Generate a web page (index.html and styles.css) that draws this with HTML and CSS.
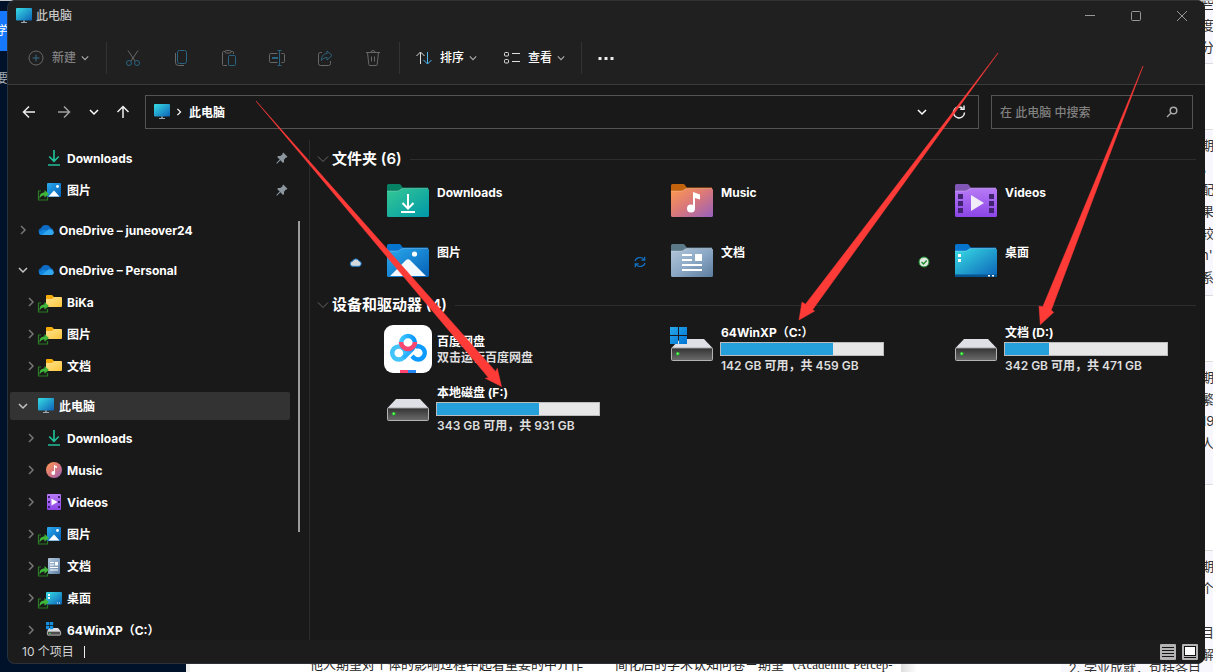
FILE: index.html
```
<!DOCTYPE html>
<html lang="zh-CN">
<head>
<meta charset="utf-8">
<title>此电脑</title>
<link rel="stylesheet" href="styles.css">
</head>
<body>
<svg class="defs" width="0" height="0" aria-hidden="true">
  <defs>
    <linearGradient id="g-screen" x1="0" y1="0" x2="1" y2="1"><stop offset="0" stop-color="#38dde4"/><stop offset="1" stop-color="#0c62b8"/></linearGradient>
    <linearGradient id="g-down" x1="0" y1="0" x2="1" y2="1"><stop offset="0" stop-color="#35c994"/><stop offset="1" stop-color="#0097a8"/></linearGradient>
    <linearGradient id="g-music" x1="0" y1="0" x2="1" y2="1"><stop offset="0" stop-color="#ff9a4e"/><stop offset=".5" stop-color="#d8777c"/><stop offset="1" stop-color="#9660bd"/></linearGradient>
    <linearGradient id="g-video" x1="0" y1="0" x2="0" y2="1"><stop offset="0" stop-color="#b77af5"/><stop offset="1" stop-color="#8b45e6"/></linearGradient>
    <linearGradient id="g-pic" x1="0" y1="0" x2="1" y2="1"><stop offset="0" stop-color="#2ba9ee"/><stop offset="1" stop-color="#0560b5"/></linearGradient>
    <linearGradient id="g-doc" x1="0" y1="0" x2="1" y2="1"><stop offset="0" stop-color="#b3c6d8"/><stop offset=".5" stop-color="#8ba8c6"/><stop offset="1" stop-color="#5d7d9f"/></linearGradient>
    <linearGradient id="g-yellow" x1="0" y1="0" x2="1" y2="1"><stop offset="0" stop-color="#ffe390"/><stop offset="1" stop-color="#fdc73c"/></linearGradient>
    <linearGradient id="g-drive" x1="0" y1="0" x2="0" y2="1"><stop offset="0" stop-color="#333"/><stop offset="1" stop-color="#6b6b6b"/></linearGradient>
    <linearGradient id="g-win" x1="0" y1="0" x2="1" y2="1"><stop offset="0" stop-color="#28a8ea"/><stop offset="1" stop-color="#0074d4"/></linearGradient>
    <linearGradient id="g-pan" x1="0" y1="0" x2="1" y2="0"><stop offset="0" stop-color="#3fc8ff"/><stop offset="1" stop-color="#0a96ff"/></linearGradient>
  </defs>
  <symbol id="i-right" viewBox="0 0 10 10"><path d="M3 1l4 4-4 4" fill="none" stroke="currentColor" stroke-width="1.5"/></symbol>
  <symbol id="i-chev" viewBox="0 0 10 10"><path d="M1 3l4 4 4-4" fill="none" stroke="currentColor" stroke-width="1.5"/></symbol>
  <symbol id="i-thin" viewBox="0 0 12 12"><path d="M1 3.500l5 5 5-5" fill="none" stroke="currentColor"/></symbol>
  <symbol id="i-pc" viewBox="0 0 16 16"><rect width="16" height="12.5" rx="1" fill="url(#g-screen)"/><path d="M7.2 12.5h1.6V14H11v1H5v-1h2.2z" fill="#9aa8b4"/></symbol>
  <symbol id="i-dl" viewBox="0 0 16 16"><path d="M8 0v11M3.2 6.5L8 11.3l4.800-4.800M2 15h12" fill="none" stroke="#20bc97" stroke-width="1.7"/></symbol>
  <symbol id="i-cloud" viewBox="0 0 16 16"><path d="M3.500 13A3.500 3.500 0 0 1 3 6.200 5.300 5.300 0 0 1 12.700 6a3.600 3.600 0 0 1 0 7z" fill="#0f6cc4"/><path d="M1 11.500C3 7.500 7 6.500 9 9l-1 4H3.500A3.500 3.500 0 0 1 1 11.500z" fill="#1289e0"/><path d="M4 13l5-4.500a4 4 0 0 1 6.800 1.800A2.700 2.700 0 0 1 13 13z" fill="#31a8f0"/></symbol>
  <symbol id="i-link" viewBox="0 0 12 12"><path d="M4 2H1.500v9h9V8" fill="none" stroke="#2a7b25" stroke-width="1.200"/><path d="M2.500 9.500C2.500 5.500 4 3.500 7.500 3.500V1L12 5 7.500 8.700V6.500C5 6.300 4 7.500 2.500 9.500z" fill="#3fb53a"/></symbol>
  <symbol id="i-picture" viewBox="0 0 16 16"><rect x="1" y="1" width="14" height="14" rx="1" fill="url(#g-pic)"/><path d="M2.500 14.500L8 8.500l5.500 6z" fill="#fff"/><circle cx="11.500" cy="4.500" r="1.400" fill="#fff"/></symbol>
  <symbol id="i-yellow" viewBox="0 0 16 16"><path d="M0 2a1 1 0 0 1 1-1h5l2 2h7v4H0z" fill="#f5ab0a"/><path d="M0 5h6l2-2h7a1 1 0 0 1 1 1v8a1 1 0 0 1-1 1H1a1 1 0 0 1-1-1z" fill="url(#g-yellow)"/></symbol>
  <symbol id="i-music" viewBox="0 0 16 16"><circle cx="8" cy="8" r="8" fill="url(#g-music)"/><path d="M8 3l3 1.500v1.600L9 5.500V11" fill="#fff"/><circle cx="7.300" cy="11" r="1.900" fill="#fff"/><path d="M8 3h1v8H8z" fill="#fff"/></symbol>
  <symbol id="i-video" viewBox="0 0 16 16"><rect x="1" width="14" height="16" rx="1" fill="url(#g-video)"/><path d="M2 2h2v2H2zM2 7h2v2H2zM2 12h2v2H2zM12 2h2v2h-2zM12 7h2v2h-2zM12 12h2v2h-2z" fill="#3c1f70"/><path d="M5.500 4.500v7l6-3.500z" fill="#fff"/></symbol>
  <symbol id="i-doc" viewBox="0 0 16 16"><rect x="2" width="12" height="16" rx="1" fill="url(#g-doc)"/><path d="M4 4h4v1H4zM4 6.500h4v1H4zM9 4h3v3.500H9zM4 9h8v1H4zM4 11.500h8v1H4z" fill="#fff"/></symbol>
  <symbol id="i-desk" viewBox="0 0 16 16"><rect y="2" width="16" height="12.500" rx="1" fill="url(#g-screen)"/><path d="M2 4h2v2H2zM2 7h2v2H2zM11 12.500h1v1h-1zM13 12.500h1v1h-1z" fill="#fff"/></symbol>
  <symbol id="i-disk" viewBox="0 0 16 16"><path d="M3 6h9l3 3.500H1z" fill="#dedfe4"/><rect x="1.400" y="9.400" width="13.200" height="3.700" rx=".6" fill="#4c4c4c" stroke="#b5b5b5"/><path d="M3 11h1.500v1H3z" fill="#36e036"/><path d="M0 0h3.300v3.300H0zM3.900 0h3.300v3.300H3.900zM0 3.900h3.300v3.300H0zM3.900 3.900h3.300v3.300H3.900z" fill="#148fe0"/></symbol>
  <symbol id="i-pin" viewBox="0 0 12 12"><path d="M7.200.5l4.300 4.300-.8.800-1 .2-1.700 2 0 2.200-1 .9-2.600-2.600L1.200 11.500.5 11.500.5 10.800 3.700 7.600 1.200 5.100l.9-1 2.200 0 2-1.700.2-1z" fill="#8c979f"/></symbol>
  <symbol id="f-base" viewBox="0 0 48 48"><path d="M3 6.500A1.500 1.500 0 0 1 4.500 5h10.700c1.500 0 2.300 2 3.500 3.500H44V15H3z" fill="currentColor"/><path d="M3 12h10c3 0 3.500-2.500 6-2.500h24.500A1.500 1.500 0 0 1 45 11v25.500a1.500 1.500 0 0 1-1.500 1.500h-39A1.500 1.500 0 0 1 3 36.500z"/><path d="M3 12h10c3 0 3.500-2.500 6-2.500h25" fill="none" stroke="#fff" stroke-opacity=".3" stroke-width=".8"/></symbol>
  <symbol id="d-base" viewBox="0 0 48 48"><path d="M12 14h24l8.500 9h-41z" fill="#dfe0e5"/><rect x="3.500" y="22.900" width="41" height="12.600" rx="1" fill="url(#g-drive)" stroke="#b3b3b3"/><circle cx="9.800" cy="28.800" r="1.800" fill="#20d02a"/><circle cx="9.600" cy="28.600" r=".8" fill="#9dfc8f"/></symbol>
</svg>

<div class="backdrop" aria-hidden="true">
  <div class="back-nav">
    <span class="back-tab">学</span>
    <span class="back-item">要</span>
  </div>
  <div class="back-page">
    <p>他人期望对个体的影响过程中起着重要的中介作</p>
    <p>简化后的学术认知问卷－期望（Academic Percep-</p>
  </div>
  <div class="back-notes"><p>2. 学业成就，包括各目</p></div>
  <div class="back-edge">
    <div class="edge-panel edge-first"><p>些</p><p>度</p><p>分</p></div>
    <div class="edge-panel edge-second"><p>期</p><p>，</p><p>配</p><p>果</p><p>较</p><p>n's</p><p>系</p></div>
    <div class="edge-panel edge-third"><p>期</p><p>繁</p><p>19,</p><p>人</p></div>
    <div class="edge-panel edge-last"><p>期</p><p>个</p><p></p><p>目</p><p>解</p></div>
  </div>
</div>

<main class="window">
  <header class="titlebar">
    <svg class="i16"><use href="#i-pc"/></svg>
    <h1>此电脑</h1>
    <div class="caption">
      <button type="button" aria-label="最小化"><svg viewBox="0 0 12 12"><path d="M1 5.500h10"/></svg></button>
      <button type="button" aria-label="最大化"><svg viewBox="0 0 12 12"><rect x="1.500" y="1.500" width="9" height="9" rx="1"/></svg></button>
      <button type="button" aria-label="关闭"><svg viewBox="0 0 12 12"><path d="M1 1l10 10M11 1L1 11"/></svg></button>
    </div>
  </header>

  <div class="toolbar" role="toolbar" aria-label="命令栏">
    <button type="button" class="cmd cmd-new" disabled><svg class="i16" viewBox="0 0 16 16"><circle cx="8" cy="8" r="7" stroke="#686868"/><path d="M8 4.500v7M4.500 8h7" stroke="#376a86"/></svg><span>新建</span><svg class="i10"><use href="#i-chev"/></svg></button>
    <span class="sep"></span>
    <button type="button" class="tool" aria-label="剪切" disabled><svg class="i18" viewBox="0 0 18 18"><path d="M4 1.500l7 10.500M14 1.500L7 12" stroke="#686868"/><circle cx="5" cy="14" r="2.500" stroke="#2b6482"/><circle cx="13" cy="14" r="2.500" stroke="#2b6482"/></svg></button>
    <button type="button" class="tool" aria-label="复制" disabled><svg class="i18" viewBox="0 0 18 18"><path d="M3.500 4v9.500a3 3 0 0 0 3 3H12" stroke="#686868"/><rect x="5.500" y="1.500" width="9" height="13" rx="2" stroke="#2b6482"/></svg></button>
    <button type="button" class="tool" aria-label="粘贴" disabled><svg class="i18" viewBox="0 0 18 18"><path d="M5 2.500H3.500a1 1 0 0 0-1 1v12a1 1 0 0 0 1 1H7M11 2.500h1.500a1 1 0 0 1 1 1V5" stroke="#686868"/><rect x="5" y="1.500" width="6" height="2.500" rx="1.200" stroke="#686868"/><rect x="8.500" y="6.500" width="7" height="10" rx="1" stroke="#2b6482"/></svg></button>
    <button type="button" class="tool" aria-label="重命名" disabled><svg class="i18" viewBox="0 0 18 18"><path d="M9.500 4.500h-7a1 1 0 0 0-1 1v7a1 1 0 0 0 1 1h7M13.500 4.500h2a1 1 0 0 1 1 1v7a1 1 0 0 1-1 1h-2" stroke="#686868"/><path d="M9.500 1.500h4M9.500 16.500h4M11.500 1.500v15" stroke="#2b6482"/><path d="M4 9h6" stroke="#2b6482" stroke-width="2"/></svg></button>
    <button type="button" class="tool" aria-label="共享" disabled><svg class="i18" viewBox="0 0 18 18"><path d="M6 3.500H4.500a2 2 0 0 0-2 2v9a2 2 0 0 0 2 2h8a2 2 0 0 0 2-2V12" stroke="#686868"/><path d="M11 2l5 4.500-5 4.500V8.500c-2.500 0-4 1-5.500 3 0-4 1.500-6.500 5.500-7z" stroke="#2b6482"/></svg></button>
    <button type="button" class="tool" aria-label="删除" disabled><svg class="i18" viewBox="0 0 18 18"><path d="M2 3.500h14M7 3.500a2 2 0 0 1 4 0M3.500 3.500l1.300 12a1 1 0 0 0 1 1h6.400a1 1 0 0 0 1-1l1.300-12M7.500 7.500v5M10.500 7.500v5" stroke="#686868"/></svg></button>
    <span class="sep"></span>
    <button type="button" class="cmd cmd-sort"><svg class="i16" viewBox="0 0 16 16"><path d="M4.500 14V2.500M.5 6l4-4 4 4" stroke="#ddd"/><path d="M11.500 2v11.500M7.500 10l4 4 4-4" stroke="#4cb4f0"/></svg><span>排序</span><svg class="i10"><use href="#i-chev"/></svg></button>
    <button type="button" class="cmd cmd-view"><svg class="i16" viewBox="0 0 16 16"><rect x=".5" y="2.500" width="4" height="3.500" rx="1" stroke="#ddd"/><rect x=".5" y="9.500" width="4" height="3.500" rx="1" stroke="#ddd"/><path d="M8 3.500h8M8 11.500h8" stroke="#ddd"/></svg><span>查看</span><svg class="i10"><use href="#i-chev"/></svg></button>
    <span class="sep"></span>
    <button type="button" class="tool" aria-label="更多"><svg class="i18" viewBox="0 0 18 18"><path d="M1.500 8h3v3h-3zM7.500 8h3v3h-3zM13.500 8h3v3h-3z" fill="#eee"/></svg></button>
  </div>

  <div class="addressbar">
    <button type="button" class="nav-back" aria-label="后退"><svg class="i14" viewBox="0 0 14 14"><path d="M13 7H1.500M7 1.500L1.500 7 7 12.500"/></svg></button>
    <button type="button" class="nav-forward" aria-label="前进"><svg class="i14" viewBox="0 0 14 14"><path d="M1 7h11.500M7 1.500L12.500 7 7 12.500"/></svg></button>
    <button type="button" class="nav-recent" aria-label="最近位置"><svg class="i10"><use href="#i-chev"/></svg></button>
    <button type="button" class="nav-up" aria-label="向上"><svg class="i14" viewBox="0 0 14 14"><path d="M7 13V1.500M1.500 7L7 1.500 12.500 7"/></svg></button>
    <div class="address">
      <svg class="i16"><use href="#i-pc"/></svg>
      <svg class="crumb"><use href="#i-right"/></svg>
      <a href="#">此电脑</a>
      <button type="button" class="address-list" aria-label="历史记录"><svg class="i10"><use href="#i-chev"/></svg></button>
      <button type="button" aria-label="刷新"><svg class="i14" viewBox="0 0 14 14"><path d="M12.500 7.500A5.500 5.500 0 1 1 10.500 3.200M12 .5v3.800H8.200"/></svg></button>
    </div>
    <label class="search">
      <input type="search" aria-label="搜索" placeholder="在 此电脑 中搜索">
      <svg class="i14" viewBox="0 0 14 14"><circle cx="8.500" cy="5.500" r="3.300"/><path d="M6 8L2 12"/></svg>
    </label>
  </div>

  <div class="panes">
    <nav class="sidebar" aria-label="导航窗格">
      <ul>
        <li class="child"><svg class="i10 hid"><use href="#i-right"/></svg><svg class="i16"><use href="#i-dl"/></svg><a href="#">Downloads</a><svg class="i12 pin"><use href="#i-pin"/></svg></li>
        <li class="child"><svg class="i10 hid"><use href="#i-right"/></svg><span class="linked"><svg class="i16"><use href="#i-picture"/></svg><svg class="badge"><use href="#i-link"/></svg></span><a href="#">图片</a><svg class="i12 pin"><use href="#i-pin"/></svg></li>
      </ul>
      <ul>
        <li><svg class="i10"><use href="#i-right"/></svg><svg class="i16"><use href="#i-cloud"/></svg><a href="#">OneDrive – juneover24</a></li>
      </ul>
      <ul>
        <li><svg class="i10 open"><use href="#i-chev"/></svg><svg class="i16"><use href="#i-cloud"/></svg><a href="#">OneDrive – Personal</a></li>
        <li class="child"><svg class="i10"><use href="#i-right"/></svg><span class="linked"><svg class="i16"><use href="#i-yellow"/></svg><svg class="badge"><use href="#i-link"/></svg></span><a href="#">BiKa</a></li>
        <li class="child"><svg class="i10"><use href="#i-right"/></svg><span class="linked"><svg class="i16"><use href="#i-yellow"/></svg><svg class="badge"><use href="#i-link"/></svg></span><a href="#">图片</a></li>
        <li class="child"><svg class="i10"><use href="#i-right"/></svg><span class="linked"><svg class="i16"><use href="#i-yellow"/></svg><svg class="badge"><use href="#i-link"/></svg></span><a href="#">文档</a></li>
      </ul>
      <ul>
        <li class="selected"><svg class="i10 open"><use href="#i-chev"/></svg><svg class="i16"><use href="#i-pc"/></svg><a href="#">此电脑</a></li>
        <li class="child"><svg class="i10"><use href="#i-right"/></svg><svg class="i16"><use href="#i-dl"/></svg><a href="#">Downloads</a></li>
        <li class="child"><svg class="i10"><use href="#i-right"/></svg><svg class="i16"><use href="#i-music"/></svg><a href="#">Music</a></li>
        <li class="child"><svg class="i10"><use href="#i-right"/></svg><svg class="i16"><use href="#i-video"/></svg><a href="#">Videos</a></li>
        <li class="child"><svg class="i10"><use href="#i-right"/></svg><span class="linked"><svg class="i16"><use href="#i-picture"/></svg><svg class="badge"><use href="#i-link"/></svg></span><a href="#">图片</a></li>
        <li class="child"><svg class="i10"><use href="#i-right"/></svg><span class="linked"><svg class="i16"><use href="#i-doc"/></svg><svg class="badge"><use href="#i-link"/></svg></span><a href="#">文档</a></li>
        <li class="child"><svg class="i10"><use href="#i-right"/></svg><span class="linked"><svg class="i16"><use href="#i-desk"/></svg><svg class="badge"><use href="#i-link"/></svg></span><a href="#">桌面</a></li>
        <li class="child"><svg class="i10"><use href="#i-right"/></svg><svg class="i16"><use href="#i-disk"/></svg><a href="#">64WinXP（C:）</a></li>
      </ul>
      <span class="scroll-thumb"></span>
    </nav>

    <section class="content">
      <h2><svg class="i12"><use href="#i-thin"/></svg>文件夹 (6)</h2>
      <div class="tiles">
        <article class="tile folder"><span class="state"></span>
          <svg class="icon" viewBox="0 0 48 48"><use href="#f-base" color="#078163" fill="url(#g-down)"/><path d="M24 15v14M18.500 24l5.500 5.500 5.500-5.500M17 33h14" fill="none" stroke="#fff" stroke-width="2"/></svg>
          <h3>Downloads</h3></article>
        <article class="tile folder"><span class="state"></span>
          <svg class="icon" viewBox="0 0 48 48"><use href="#f-base" color="#c4630e" fill="url(#g-music)"/><path d="M25 13l7 2.500v5l-5-1.500v11h-2z" fill="#fff"/><circle cx="23" cy="29.500" r="4" fill="#fff"/></svg>
          <h3>Music</h3></article>
        <article class="tile folder"><span class="state"></span>
          <svg class="icon" viewBox="0 0 48 48"><use href="#f-base" color="#8157b5" fill="url(#g-video)"/><path d="M6 15h5v5H6zM6 22h5v5H6zM6 29h5v5H6zM37 15h5v5h-5zM37 22h5v5h-5zM37 29h5v5h-5z" fill="#42236f"/><path d="M19 16v16l13-8z" fill="#f1edf8"/></svg>
          <h3>Videos</h3></article>
        <article class="tile folder"><span class="state"><svg class="i12" viewBox="0 0 12 12"><path d="M3 10.300A2.500 2.500 0 0 1 2.500 5.300 3.500 3.500 0 0 1 9 5a2.700 2.700 0 0 1 0 5.300z" fill="#d5d8db" stroke="#1d7fd1"/></svg></span>
          <svg class="icon" viewBox="0 0 48 48"><use href="#f-base" color="#0574cf" fill="url(#g-pic)"/><path d="M6 37l15.500-15.500a3.500 3.500 0 0 1 5 0L42 37z" fill="#f3f8fe"/><circle cx="30.500" cy="15" r="2.600" fill="#fff"/></svg>
          <h3>图片</h3></article>
        <article class="tile folder"><span class="state"><svg class="i12" viewBox="0 0 12 12"><path d="M1 5a5 4.500 0 0 1 9-1.500M10.700.8v3.400H7.300M11 7a5 4.500 0 0 1-9 1.500M1.300 11.200V7.800h3.400" fill="none" stroke="#1273c8" stroke-width="1.200"/></svg></span>
          <svg class="icon" viewBox="0 0 48 48"><use href="#f-base" color="#5b7988" fill="url(#g-doc)"/><path d="M14 15h10v2H14zM14 20h10v2H14zM27 15h7v7h-7zM14 25h20v2H14zM14 30h20v2H14z" fill="#fff"/></svg>
          <h3>文档</h3></article>
        <article class="tile folder"><span class="state"><svg class="i12" viewBox="0 0 12 12"><circle cx="6" cy="6" r="5" fill="#dfe8df" stroke="#188a2c"/><path d="M3.500 6l2 2 3.200-3.500" fill="none" stroke="#188a2c" stroke-width="1.300"/></svg></span>
          <svg class="icon" viewBox="0 0 48 48"><use href="#f-base" color="#0574cf" fill="url(#g-screen)"/><path d="M3 35.500h42v1.500a1 1 0 0 1-1 1H4a1 1 0 0 1-1-1z" fill="#07538f"/><path d="M6 15h3v3H6zM6 20h3v3H6zM36 36h2v1.500h-2zM40 36h2v1.500h-2z" fill="#fff"/></svg>
          <h3>桌面</h3></article>
      </div>

      <h2><svg class="i12"><use href="#i-thin"/></svg>设备和驱动器 (4)</h2>
      <div class="tiles">
        <article class="tile app"><span class="state"></span>
          <svg class="icon" viewBox="0 0 48 48"><rect width="48" height="48" rx="9" fill="#fff"/><path d="M16 45h8v3h-8z" fill="#ff4470"/><path d="M24 45h8v3h-8z" fill="#2488f6"/><g fill="none" stroke-width="4.500"><path d="M28 31l2 2a6.600 6.600 0 1 0 1.500-11.200" stroke="#0d9bff"/><circle cx="14.800" cy="28" r="6.600" stroke="#42c4fb"/><path d="M19.500 33l9.500-9.500" stroke="#2bb2ff"/><circle cx="24" cy="18" r="7" stroke="url(#g-pan)"/><path d="M17 17a7 7 0 1 0 14 0" stroke="#f84770"/></g></svg>
          <div class="detail"><h3>百度网盘</h3><p>双击运行百度网盘</p></div></article>
        <article class="tile drive"><span class="state"></span>
          <svg class="icon" viewBox="0 0 48 48"><use href="#d-base"/><path d="M2 2h8v8H2zM11 2h8v8h-8zM2 11h8v8H2zM11 11h8v8h-8z" fill="url(#g-win)"/></svg>
          <div class="detail"><h3>64WinXP（C:）</h3><div class="meter"><span style="width:69%"></span></div><p>142 GB 可用，共 459 GB</p></div></article>
        <article class="tile drive"><span class="state"></span>
          <svg class="icon" viewBox="0 0 48 48"><use href="#d-base"/></svg>
          <div class="detail"><h3>文档 (D:)</h3><div class="meter"><span style="width:27.400%"></span></div><p>342 GB 可用，共 471 GB</p></div></article>
        <article class="tile drive"><span class="state"></span>
          <svg class="icon" viewBox="0 0 48 48"><use href="#d-base"/></svg>
          <div class="detail"><h3>本地磁盘 (F:)</h3><div class="meter"><span style="width:63.200%"></span></div><p>343 GB 可用，共 931 GB</p></div></article>
      </div>
    </section>
  </div>

  <footer class="statusbar">
    <span class="count">10 个项目</span>
    <button type="button" class="first" aria-label="详细信息"><svg class="i16" viewBox="0 0 16 16"><rect width="16" height="16" rx="1" fill="#b4b4b4"/><path d="M2 3.500h12M2 6.500h12M2 9.500h12M2 12.500h12" stroke="#161616"/></svg></button>
    <button type="button" aria-label="大图标"><svg class="i16" viewBox="0 0 16 16"><rect width="16" height="16" rx="1" fill="#b4b4b4"/><rect x="2.500" y="2.500" width="11" height="9" fill="#fff" stroke="#111"/><path d="M2 13.500h12" stroke="#111"/></svg></button>
  </footer>
</main>

<svg class="marks" width="1213" height="672" viewBox="0 0 1213 672" aria-hidden="true">
  <g fill="#ff3b38" stroke="#ff3b38" stroke-width=".5">
    <path d="M256 101L495.600 371.400 497.300 368.300 501.500 386.500 485.300 378.300 488.400 377.600z"/>
    <path d="M998 53L812.600 309.700 814.700 311 799 320 802 302 805.400 304.300z"/>
    <path d="M1143 66L1051.200 310.200 1053.700 312.300 1040.300 324.700 1039 306.300 1042.800 306.800z"/>
  </g>
</svg>
</body>
</html>
```

FILE: styles.css
```
* { box-sizing: border-box; }

body {
  margin: 0;
  height: 100vh;
  overflow: hidden;
  background: #fff;
  color: #fff;
  font: 12px/16px Inter, "Noto Sans CJK SC", sans-serif;
}

h1, h2, h3, p, ul { margin: 0; padding: 0; font-size: inherit; font-weight: inherit; }
ul { list-style: none; }
a { color: inherit; text-decoration: none; }
svg { display: block; flex: none; }
button { display: flex; align-items: center; justify-content: center; margin: 0; padding: 0; border: 0; background: none; color: inherit; font: inherit; }

.defs { position: absolute; }
.i10 { width: 10px; height: 10px; }
.i12 { width: 12px; height: 12px; }
.i14 { width: 14px; height: 14px; }
.i16 { width: 16px; height: 16px; }
.i18 { width: 18px; height: 18px; }

/* Windows behind the explorer */
.backdrop {
  position: absolute;
  inset: 0;
  display: flex;
  overflow: hidden;
  border-top: 1px solid #c6c9ca;
  color: #333;
}
.back-nav { width: 186px; padding-top: 10px; background: #001229; color: #fff; }
.back-tab { display: block; width: 40px; height: 40px; margin-left: -4px; background: #1677ff; line-height: 40px; }
.back-item { display: block; margin: 20px 0 0 -4px; color: #a6adb4; }
.back-page {
  display: flex;
  align-items: flex-end;
  gap: 32px;
  width: 715px;
  padding-left: 120px;
  border-left: 4px solid #eee;
  background: #fff;
  color: #222;
  font: 13px/14px "Liberation Serif", "Noto Sans CJK SC", serif;
  white-space: nowrap;
}
.back-notes { display: flex; flex: 1; align-items: flex-end; justify-content: flex-end; background: linear-gradient(90deg, #ddd, #fff 16px, #fff 160px, #f8f7fd 160px); font-size: 13px; white-space: nowrap; }
.back-notes p { margin-bottom: -4px; }
.back-edge { width: 12px; overflow: hidden; background: #fff; }
.edge-panel { overflow: hidden; border-bottom: 1px solid #ddd; background: #f8f7fd; font-size: 13px; line-height: 22px; white-space: nowrap; }
.edge-panel p { min-height: 22px; }
.edge-first { height: 63px; }
.edge-first p:first-child { margin-top: -9px; }
.edge-second, .edge-third, .edge-last { margin-top: 65px; padding-top: 4px; border-top: 1px solid #ddd; }
.edge-second { height: 167px; }
.edge-third { height: 124px; }
.edge-last { height: 130px; }

/* Explorer window */
.window {
  position: relative;
  display: flex;
  flex-direction: column;
  height: calc(100vh - 8px);
  margin: 0 8px;
  overflow: hidden;
  border-top: 1px solid #303234;
  border-bottom: 1px solid #2c2f33;
  border-radius: 8px;
  box-shadow: -1px 0 0 #2a3440;
  background: #191919;
}

.titlebar { display: flex; align-items: center; gap: 4px; height: 29px; padding-left: 8px; background: #202020; color: #c4c4c4; }
.titlebar h1 { padding-top: 1px; font-weight: 500; }
.caption { display: flex; align-self: stretch; margin-left: auto; }
.caption button { width: 46px; }
.caption svg { width: 12px; height: 12px; fill: none; stroke: #989898; }

.toolbar { display: flex; align-items: center; height: 55px; padding-top: 1px; border-bottom: 1px solid #3a3a3a; background: #202020; }
.toolbar svg { fill: none; }
.sep { width: 1px; height: 32px; margin: 0 2px; background: #333; }
.tool { width: 48px; height: 36px; }
.sep + .tool:last-child { width: 44px; }
.cmd { height: 36px; font-weight: 500; }
.cmd .i10 { width: 8px; height: 8px; margin-left: 5px; color: #aaa; }
.cmd span { margin-left: 8px; padding-top: 1px; }
.cmd-new { padding: 0 15px 0 20px; color: #808080; }
.cmd-sort { padding: 0 13px 0 14px; }
.cmd-view { padding: 0 14px; }

.addressbar { display: flex; align-items: center; padding: 10px 12px 11px 3px; }
.addressbar svg { fill: none; stroke-width: 1.5; }
.addressbar > button, .address button { height: 32px; stroke: #eee; }
.nav-back { width: 36px; }
.addressbar > .nav-forward { width: 34px; stroke: #a0a0a0; }
.nav-recent { width: 26px; }
.nav-up { width: 32px; }
.nav-recent svg use, .address-list svg use { stroke: none; }
.address { display: flex; flex: 1; align-items: center; height: 34px; margin: 0 12px 0 6px; padding: 0 1px 0 8px; border: 1px solid #545454; font-weight: 700; }
.address .crumb { width: 8px; height: 8px; margin: 0 6px 0 5px; }
.address a { padding-top: 1px; }
.address button { width: 37px; }
.address .address-list { margin-left: auto; }
.search { display: flex; align-items: center; width: 202px; height: 34px; padding: 0 13px 0 8px; border: 1px solid #545454; }
.search input { flex: 1; min-width: 0; padding: 2px 0 0; border: 0; outline: 0; background: none; color: #fff; font: inherit; font-weight: 500; }
.search input::placeholder { color: #808080; opacity: 1; }
.search svg { stroke: #a8a8a8; }

.panes { display: flex; flex: 1; min-height: 0; }

.sidebar { position: relative; width: 302px; overflow: hidden; padding: 4px 19px 0 2px; border-right: 1px solid #2b2b2b; font-weight: 700; }
.sidebar ul { display: flex; flex-direction: column; gap: 4px; margin-bottom: 12px; }
.sidebar li { display: flex; align-items: center; height: 28px; padding-left: 8px; border-radius: 2px; }
.sidebar li.child { padding-left: 16px; }
.sidebar li > .i10 { margin-right: 10px; color: #767676; }
.sidebar li > .open { color: #c4c4c4; }
.sidebar li > .hid { visibility: hidden; }
.sidebar a { margin-left: 5px; padding-top: 2px; white-space: nowrap; }
.sidebar .pin { margin-left: auto; margin-right: 2px; }
.sidebar .selected { background: #333; }
.linked { position: relative; }
.badge { position: absolute; left: -9px; bottom: -3px; width: 12px; height: 12px; }
.scroll-thumb { position: absolute; right: 9px; top: 81px; width: 2px; height: 311px; background: #9b9b9b; }

.content { flex: 1; min-width: 0; padding: 6px 9px 0 7px; }
.content h2 { display: flex; align-items: center; height: 26px; font-size: 15px; font-weight: 600; line-height: 20px; }
.content h2 svg { margin-right: 3px; color: #666; }
.content h2::after { content: ""; flex: 1; height: 1px; margin-left: 8px; background: #2e2e2e; }
.tiles { display: grid; grid-template-columns: repeat(3, 1fr); padding-left: 27px; }
.tile { display: flex; align-items: flex-start; height: 60px; white-space: nowrap; }
.tile h3 { padding-left: 1px; font-weight: 700; }
.tile p { padding-left: 1px; color: #dedede; font-weight: 600; }
.state { display: flex; align-items: center; width: 40px; height: 60px; padding-left: 6px; }
.icon { width: 48px; height: 48px; margin: 7px 4px 0 0; }
.folder h3 { padding-top: 13px; }
.app .detail { padding-top: 16px; }
.drive .detail { display: flex; flex-direction: column; gap: 1px; padding-top: 7px; }
.meter { width: 164px; height: 14px; border: 1px solid #bcbcbc; background: #e6e6e6; }
.meter span { display: block; height: 100%; background: #26a0da; }
.meter + p { padding-top: 1px; }

.statusbar { display: flex; align-items: center; height: 23px; padding: 0 7px 0 14px; background: #1c1c1c; color: #d5d5d5; }
.count { padding-right: 10px; border-right: 1px solid #eee; line-height: 12px; }
.statusbar .first { margin: 0 6px 0 auto; }

.marks { position: absolute; left: 0; top: 0; pointer-events: none; }
```
